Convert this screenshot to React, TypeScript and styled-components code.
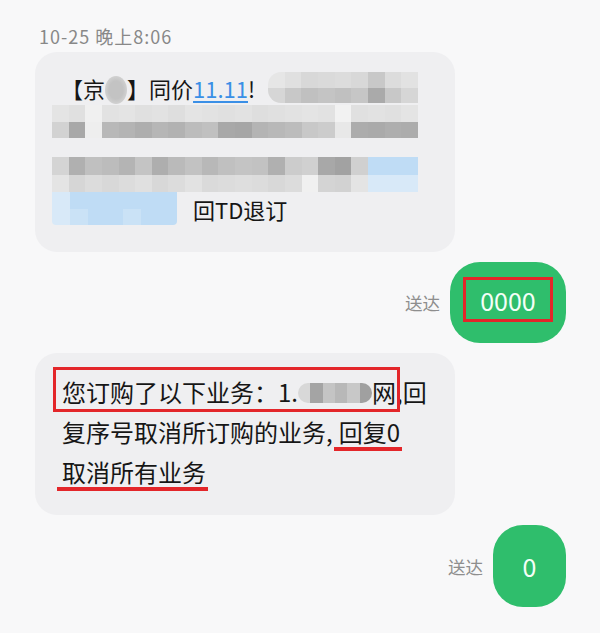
import styled, { createGlobalStyle } from "styled-components"

const GlobalStyle = createGlobalStyle`
  html, body {
    margin: 0;
    padding: 0;
    background: #f8f8f9;
  }
  body {
    font-family: "Noto Sans CJK SC", "Noto Sans", sans-serif;
    color: #161616;
  }
`

// pixelated (censored) areas: each token is a grey level, x1..x3 are blues
const BLUES: Record<string, string> = {
  x1: "#bfdcf5",
  x2: "#d8e9f8",
  x3: "#cae2f6",
}
const tone = (t: string) => BLUES[t] ?? `#${t}${t}${t}`

const HEAD_ROWS = ["e6 e0 d8 da dc d8 c8 dc e2", "d6 c8 c0 c4 c0 c6 aa c8 d6"]
const LINE2_ROWS = [
  "e4 e0 f0 e2 e4 e0 e2 de e4 e2 e0 e2 de e0 e2 e4 e2 f2 e0 e2 e0 e4",
  "d2 a8 ee b8 b4 ae b6 b2 bc c0 a8 a6 b4 b8 bc c8 cc e8 ac aa ae ac",
]
const LINE3_ROWS = [
  "d4 b0 c0 bc b4 c4 ae ba c2 b8 c0 c4 c2 b0 cc d0 a8 a2 d0 x1 x1 x1",
  "e4 d6 dc d8 dc e0 d8 dc e2 da dc de dc d8 dc f0 d4 d2 e4 x2 x2 x2",
]
const FOOT_ROWS = ["x2 x1 x1 x1 x1 x1 x1", "x2 x3 x1 x1 x3 x1 x1"]
const NAME_ROWS = ["d8 a4 c4 b8 c8 a0"]

interface MosaicProps {
  rows: string[]
  className?: string
}

const Mosaic = ({ rows, className }: MosaicProps) => {
  const grid = rows.map((r) => r.split(" "))
  return (
    <MosaicGrid className={className} $cols={grid[0].length} $rows={grid.length}>
      {grid.flat().map((t, i) => (
        <Cell key={i} $c={tone(t)} />
      ))}
    </MosaicGrid>
  )
}

const App = () => {
  return (
    <Page>
      <GlobalStyle />
      <Stamp>10-25 晚上8:06</Stamp>
      <Messages>
        <PromoBubble>
          <PromoHead>
            <PromoText>
              【京<Smudge />】同价<Link>11.11</Link>!
            </PromoText>
            <HeadBlur rows={HEAD_ROWS} />
          </PromoHead>
          <LineBlur rows={LINE2_ROWS} />
          <WideBlur rows={LINE3_ROWS} />
          <PromoFoot>
            <FootBlur rows={FOOT_ROWS} />
            <FootText>回TD退订</FootText>
          </PromoFoot>
        </PromoBubble>

        <SentRow>
          <Status>送达</Status>
          <CodeBubble>
            <Framed>0000</Framed>
          </CodeBubble>
        </SentRow>

        <NoticeBubble>
          <Line>
            <Boxed>
              您订购了以下业务：1.
              <NameBlur rows={NAME_ROWS} />网
            </Boxed>
            ,回
          </Line>
          <Line>
            复序号取消所订购的业务<Comma>,</Comma>
            <Underlined>回复0</Underlined>
          </Line>
          <Line>
            <Underlined>取消所有业务</Underlined>
          </Line>
        </NoticeBubble>

        <SentRow>
          <Status>送达</Status>
          <ZeroBubble>0</ZeroBubble>
        </SentRow>
      </Messages>
    </Page>
  )
}

export default App

const Page = styled.div`
  min-height: 633px;
  box-sizing: border-box;
  padding: 24px 34px 0 35px;
`

const Stamp = styled.div`
  padding-left: 4px;
  margin-bottom: 4px;
  font-size: 18px;
  line-height: 24px;
  letter-spacing: 1px;
  color: #888888;
`

const Messages = styled.div`
  display: flex;
  flex-direction: column;
  gap: 10px;
`

const MosaicGrid = styled.div<{ $cols: number; $rows: number }>`
  display: grid;
  grid-template-columns: repeat(${(p) => p.$cols}, 1fr);
  grid-template-rows: repeat(${(p) => p.$rows}, 1fr);
  overflow: hidden;
`

const Cell = styled.div<{ $c: string }>`
  background: ${(p) => p.$c};
`

const Received = styled.div`
  width: 420px;
  box-sizing: border-box;
  background: #efeff1;
  border-radius: 22px;
`

const PromoBubble = styled(Received)`
  padding: 20px 37px 27px 17px;
`

const PromoHead = styled.div`
  display: flex;
  height: 33px;
`

const PromoText = styled.span`
  padding-left: 9px;
  font-size: 22px;
  line-height: 33px;
  white-space: nowrap;
`

const Smudge = styled.span`
  display: inline-block;
  width: 22px;
  height: 28px;
  vertical-align: middle;
  margin-top: -4px;
  border-radius: 50%;
  background: radial-gradient(ellipse at center, #c3c3c3 45%, #d6d6d6 80%, #e6e6e6 100%);
`

const Link = styled.span`
  color: #3a8fe6;
  text-decoration: underline;
  text-decoration-thickness: 1.5px;
  text-underline-offset: 3px;
`

const HeadBlur = styled(Mosaic)`
  flex: 1;
  height: 31px;
  margin-left: 13px;
  border-radius: 13px 0 0 13px;
`

const LineBlur = styled(Mosaic)`
  height: 33px;
`

const WideBlur = styled(Mosaic)`
  height: 35px;
  margin-top: 19px;
`

const PromoFoot = styled.div`
  display: flex;
  align-items: center;
  height: 33px;
`

const FootBlur = styled(Mosaic)`
  width: 125px;
  height: 33px;
  border-radius: 0 0 4px 4px;
`

const FootText = styled.span`
  margin-left: 16px;
  font-size: 22px;
`

const NoticeBubble = styled(Received)`
  padding: 19px 20px 23px 27px;
  font-size: 24px;
  line-height: 40px;
`

const Line = styled.div`
  white-space: nowrap;
`

const Comma = styled.span`
  margin-right: 6px;
`

const Boxed = styled.span`
  position: relative;
  display: inline-block;

  &::after {
    content: "";
    position: absolute;
    top: -5px;
    bottom: 0;
    left: -9px;
    right: -4px;
    border: 3px solid #e3262a;
  }
`

const NameBlur = styled(Mosaic)`
  display: inline-grid;
  width: 74px;
  height: 20px;
  vertical-align: middle;
  margin-top: -4px;
  border-radius: 10px;
`

const Underlined = styled.span`
  position: relative;
  display: inline-block;

  &::after {
    content: "";
    position: absolute;
    left: -5px;
    right: -2px;
    bottom: 1px;
    height: 4px;
    background: #e3262a;
  }
`

const SentRow = styled.div`
  display: flex;
  justify-content: flex-end;
  align-items: center;
  gap: 10px;
`

const Status = styled.span`
  font-size: 17.5px;
  color: #8e8e8e;
`

const Sent = styled.div`
  display: flex;
  align-items: center;
  justify-content: center;
  box-sizing: border-box;
  background: #2fbe6c;
  border-radius: 30px;
  color: #f4fff7;
  font-size: 25px;
`

const CodeBubble = styled(Sent)`
  padding: 15px 13px 21px;
`

const Framed = styled.div`
  display: flex;
  align-items: center;
  justify-content: center;
  width: 90px;
  height: 45px;
  box-sizing: border-box;
  border: 3px solid #e3262a;
`

const ZeroBubble = styled(Sent)`
  width: 73px;
  height: 82px;
`
